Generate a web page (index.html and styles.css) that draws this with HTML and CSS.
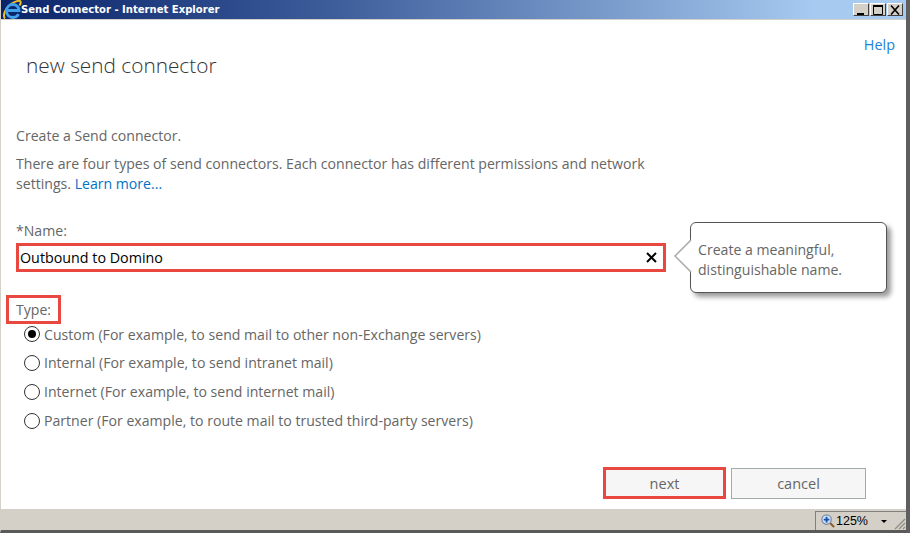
FILE: index.html
```html
<!DOCTYPE html>
<html lang="en">
<head>
<meta charset="utf-8">
<title>Send Connector - Internet Explorer</title>
<link rel="stylesheet" href="styles.css">
</head>
<body>
<div class="window">
  <header class="titlebar">
    <svg class="ie-logo" width="20" height="20" viewBox="0 0 20 20">
      <path d="M3 18.500C.5 16 3 8 9 4c4-2.800 8.500-4 9.500-2.500.5 1 0 2.500-1 4" fill="none" stroke="#f0c020" stroke-width="2"/>
      <path d="M6 10.500h11c0-3.600-2.700-6-6-6-3.900 0-6.500 2.900-6.500 6.500s2.600 6.500 6.500 6.500c2.500 0 4.500-1.200 5.500-3.300" fill="none" stroke="#3fa2ea" stroke-width="2.800"/>
    </svg>
    <span class="title-text">Send Connector - Internet Explorer</span>
    <div class="controls">
      <button class="ctl"><svg width="14" height="13" viewBox="0 0 14 13"><rect x="3" y="9" width="7" height="2" fill="#000"/></svg></button>
      <button class="ctl"><svg width="14" height="13" viewBox="0 0 14 13"><path d="M2.500 1.500h9v9h-9z" fill="none" stroke="#000"/><rect x="2" y="1" width="10" height="2" fill="#000"/></svg></button>
      <button class="ctl"><svg width="14" height="13" viewBox="0 0 14 13"><path d="M3 1.500l8 9M11 1.500l-8 9" stroke="#000" stroke-width="1.600"/></svg></button>
    </div>
  </header>

  <main class="page">
    <div class="help-row"><a class="link help" href="#">Help</a></div>
    <h1 class="heading">new send connector</h1>

    <p class="intro">Create a Send connector.</p>
    <p class="desc">There are four types of send connectors. Each connector has different permissions and network settings. <a class="link" href="#">Learn more...</a></p>

    <label class="field-label" for="name">*Name:</label>
    <div class="name-row">
      <div class="name-box">
        <input id="name" class="name-input" type="text" value="Outbound to Domino">
        <svg class="clear" width="11" height="11" viewBox="0 0 11 11"><path d="M1 1l9 9M10 1l-9 9" stroke="#000" stroke-width="2"/></svg>
      </div>
      <div class="tip">
        <svg class="tip-arrow" width="20" height="34" viewBox="0 0 20 34"><path d="M18 1L2 17l16 16" fill="#fff" stroke="#a9a9a9" stroke-width="1.500"/></svg>
        Create a meaningful, distinguishable name.
      </div>
    </div>

    <div class="type-label">Type:</div>
    <ul class="radios">
      <li class="radio-row"><span class="radio on"></span>Custom (For example, to send mail to other non-Exchange servers)</li>
      <li class="radio-row"><span class="radio"></span>Internal (For example, to send intranet mail)</li>
      <li class="radio-row"><span class="radio"></span>Internet (For example, to send internet mail)</li>
      <li class="radio-row"><span class="radio"></span>Partner (For example, to route mail to trusted third-party servers)</li>
    </ul>

    <div class="actions">
      <button class="btn btn-next">next</button>
      <button class="btn btn-cancel">cancel</button>
    </div>
  </main>

  <footer class="statusbar">
    <div class="zoom">
      <svg width="16" height="16" viewBox="0 0 17 17"><circle cx="7" cy="7" r="5" fill="#cfe3f7" stroke="#7a8aa0" stroke-width="1.300"/><path d="M7 4v6M4 7h6" stroke="#1a4fb0" stroke-width="2"/><path d="M11 11l4 4" stroke="#8a5a2a" stroke-width="2.200"/></svg>
      <span class="zoom-text">125%</span>
      <span class="caret"></span>
    </div>
    <svg class="grip" width="13" height="13" viewBox="0 0 13 13"><path d="M12 2L2 12M12 6L6 12M12 10l-2 2" stroke="#8f8c84" stroke-width="1.200"/></svg>
  </footer>
</div>
</body>
</html>
```

FILE: styles.css
```css
* { box-sizing: border-box; }
html, body { margin: 0; height: 100%; }
body { overflow: hidden; background: #d4d0c8; }

.window {
  width: 910px;
  height: 533px;
  display: flex;
  flex-direction: column;
  border-left: 1px solid #d4d0c8;
  border-right: 4px solid #5f5f5f;
  border-bottom: 3px solid #5a5a5a;
  font-family: "Open Sans", "Noto Sans", sans-serif;
  font-size: 14.1px;
  color: #666;
}

.titlebar {
  height: 20px;
  flex: none;
  display: flex;
  align-items: center;
  padding-left: 1px;
  background: linear-gradient(90deg, #0a246a 0%, #3a5a98 35%, #a6caf0 90%);
  border-bottom: 1px solid #d4d0c8;
}
.ie-logo { flex: none; margin-right: -1px; }
.title-text {
  font-family: "DejaVu Sans", sans-serif;
  font-size: 10.050px;
  font-weight: 700;
  color: #fff;
}
.controls { margin-left: auto; display: flex; gap: 1px; padding-right: 3px; }
.ctl {
  width: 16px;
  height: 13px;
  padding: 0;
  display: flex;
  background: #d4d0c8;
  border: 1px solid;
  border-color: #fff #404040 #404040 #fff;
  overflow: hidden;
}

.page {
  flex: 1;
  display: flex;
  flex-direction: column;
  background: #fff;
  padding: 16px 0 0 15px;
  position: relative;
}
.help-row { display: flex; justify-content: flex-end; padding-right: 11px; height: 18px; line-height: 18px; }
.link { color: #0072c6; text-decoration: none; }
.help { font-size: 14.400px; color: #1e82d8; }

.heading {
  margin: -4px 0 0 10px;
  font-size: 20.800px;
  line-height: 30px;
  font-weight: 300;
  color: #333;
}

.intro { margin: 46px 0 0; line-height: 20px; }
.desc { margin: 8px 0 0; width: 650px; line-height: 20px; }

.field-label { display: block; margin-top: 27px; line-height: 20px; }

.name-row { display: flex; margin-top: 2px; position: relative; }
.name-box {
  width: 650px;
  height: 29px;
  display: flex;
  align-items: center;
  padding: 0 6px 0 1px;
  border: 3px solid #e8483f;
}
.name-input {
  flex: 1;
  min-width: 0;
  border: 0;
  outline: 0;
  padding: 0;
  font: inherit;
  font-size: 14.300px;
  color: #000;
  background: transparent;
}
.clear { flex: none; }

.tip {
  position: absolute;
  left: 674px;
  top: -21px;
  width: 197px;
  height: 71px;
  padding: 17px 6px 0 7px;
  background: #fff;
  border: 1px solid #555;
  border-radius: 6px;
  box-shadow: 4px 4px 5px rgba(0, 0, 0, .4);
  font-size: 14.100px;
  line-height: 20px;
}
.tip-arrow { position: absolute; left: -18px; top: 16px; }

.type-label {
  align-self: flex-start;
  width: 55px;
  height: 29px;
  margin: 23px 0 0 -10px;
  padding-left: 7px;
  line-height: 23px;
  border: 3px solid #e8483f;
}

.radios { list-style: none; margin: 0; padding: 0 0 0 8px; }
.radio-row { display: flex; align-items: center; height: 29px; white-space: nowrap; }
.radios .radio-row:first-child { margin-top: -5px; padding-top: 1px; }
.radio {
  width: 16px;
  height: 16px;
  flex: none;
  margin-right: 4px;
  border: 1px solid #333;
  border-radius: 50%;
  background: #fff;
  display: flex;
  align-items: center;
  justify-content: center;
}
.radio.on::after { content: ""; width: 8px; height: 8px; border-radius: 50%; background: #000; }

.actions { display: flex; align-items: center; gap: 5px; margin-top: 32px; margin-left: 587px; }
.btn {
  font: inherit;
  font-size: 14.500px;
  color: #666;
  background: #f6f6f6;
  padding: 0;
}
.btn-next { width: 123px; height: 32px; border: 3px solid #e8483f; }
.btn-cancel { width: 135px; height: 31px; border: 1px solid #a3aaaa; }

.statusbar {
  height: 21px;
  flex: none;
  display: flex;
  align-items: stretch;
  justify-content: flex-end;
  background: #d4d0c8;
  padding-top: 2px;
  position: relative;
}
.zoom {
  width: 91px;
  display: flex;
  align-items: center;
  gap: 0;
  padding-left: 4px;
  border-left: 1px solid #808080;
  border-top: 1px solid #808080;
  font-family: "Liberation Sans", sans-serif;
  font-size: 12.500px;
  color: #000;
}
.caret {
  margin-left: 13px;
  border-left: 3px solid transparent;
  border-right: 3px solid transparent;
  border-top: 3px solid #000;
}
.grip { position: absolute; right: 0; bottom: 0; }
```
